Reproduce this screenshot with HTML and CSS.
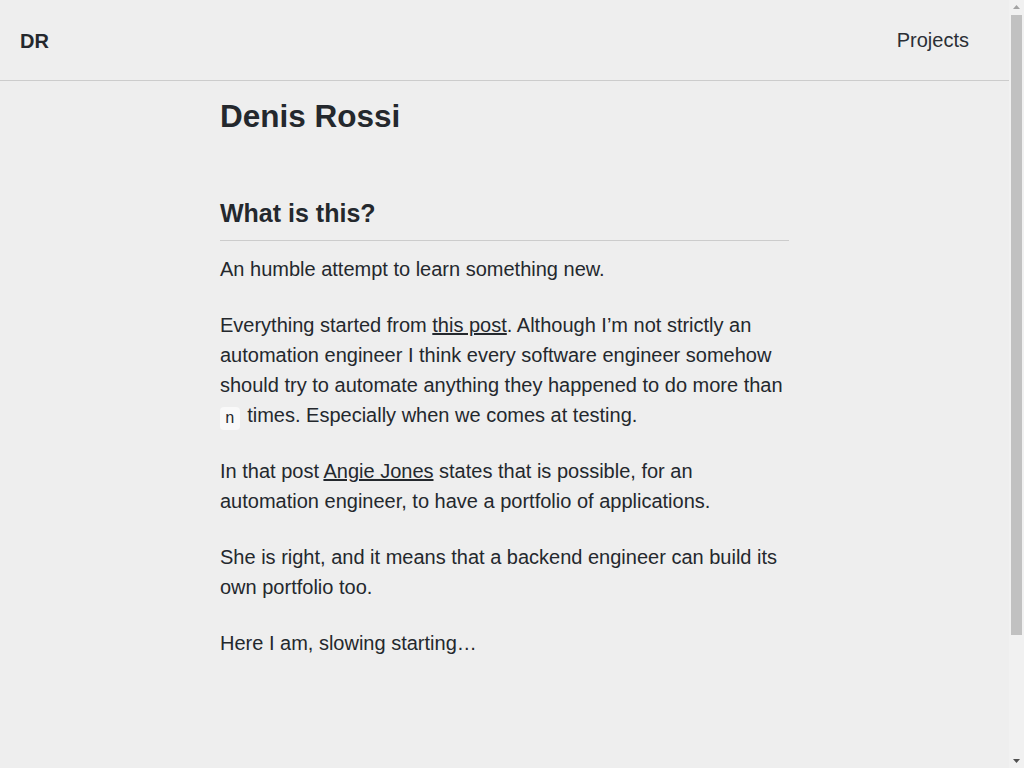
FILE: index.html
```html
<!DOCTYPE html>
<html lang="en">
<head>
<meta charset="utf-8">
<title>Denis Rossi</title>
<link rel="stylesheet" href="styles.css">
</head>
<body>
<header class="site-header">
  <a class="brand" href="#">DR</a>
  <nav class="nav"><a class="nav-link" href="#">Projects</a></nav>
</header>
<main class="content">
  <h1 class="title">Denis Rossi</h1>
  <h2 class="section-title">What is this?</h2>
  <p>An humble attempt to learn something new.</p>
  <p>Everything started from <a href="#">this post</a>. Although I’m not strictly an automation engineer I think every software engineer somehow should try to automate anything they happened to do more than <code>n</code> times. Especially when we comes at testing.</p>
  <p>In that post <a href="#">Angie Jones</a> states that is possible, for an automation engineer, to have a portfolio of applications.</p>
  <p>She is right, and it means that a backend engineer can build its own portfolio too.</p>
  <p>Here I am, slowing starting…</p>
</main>
<div class="scrollbar" aria-hidden="true">
  <svg class="sb-arrow" width="15" height="15" viewBox="0 0 15 15"><polygon points="4,9 11,9 7.5,5" fill="#a3a3a3"/></svg>
  <div class="sb-track"><div class="sb-thumb"></div></div>
  <svg class="sb-arrow" width="15" height="15" viewBox="0 0 15 15"><polygon points="4,6 11,6 7.5,10" fill="#505050"/></svg>
</div>
</body>
</html>
```
FILE: styles.css
```css
html, body {
  margin: 0;
  padding: 0;
}
body {
  background: #eeeeee;
  color: #24282d;
  font-family: "Liberation Sans", Arial, sans-serif;
  padding-right: 15px;
}
.site-header {
  height: 80px;
  border-bottom: 1px solid #cccccc;
  display: flex;
  align-items: center;
  justify-content: space-between;
  padding: 0 40px 0 20px;
}
.brand {
  color: #24282d;
  text-decoration: none;
  font-weight: bold;
  font-size: 20px;
  padding-top: 2px;
}
.nav-link {
  color: #2b2f35;
  text-decoration: none;
  font-size: 20px;
  padding-top: 2px;
}
.content {
  max-width: 569px;
  margin: 0 auto;
  padding: 0 0 270px;
}
.title {
  font-size: 31.5px;
  font-weight: bold;
  line-height: 1.2;
  margin: 17px 0 62px;
}
.section-title {
  font-size: 25px;
  font-weight: bold;
  line-height: 1.2;
  margin: 0 0 13px;
  padding-bottom: 12px;
  border-bottom: 1px solid #cccccc;
}
p {
  font-size: 20px;
  line-height: 30px;
  margin: 0 0 26px;
}
p a {
  color: #24282d;
  text-decoration: underline;
}
code {
  font-family: "Liberation Mono", monospace;
  font-size: 16px;
  line-height: 16px;
  display: inline-block;
  background: #f9f9f9;
  border-radius: 4px;
  padding: 4px 5px 3px;
  margin-right: 2px;
  vertical-align: -1px;
}
.scrollbar {
  position: fixed;
  top: 0;
  right: 0;
  width: 15px;
  height: 100vh;
  background: #f1f1f1;
  display: flex;
  flex-direction: column;
}
.sb-arrow {
  display: block;
  flex: none;
}
.sb-track {
  flex: 1;
  padding: 0 2px;
}
.sb-thumb {
  height: 620px;
  background: #c1c1c1;
}
```
